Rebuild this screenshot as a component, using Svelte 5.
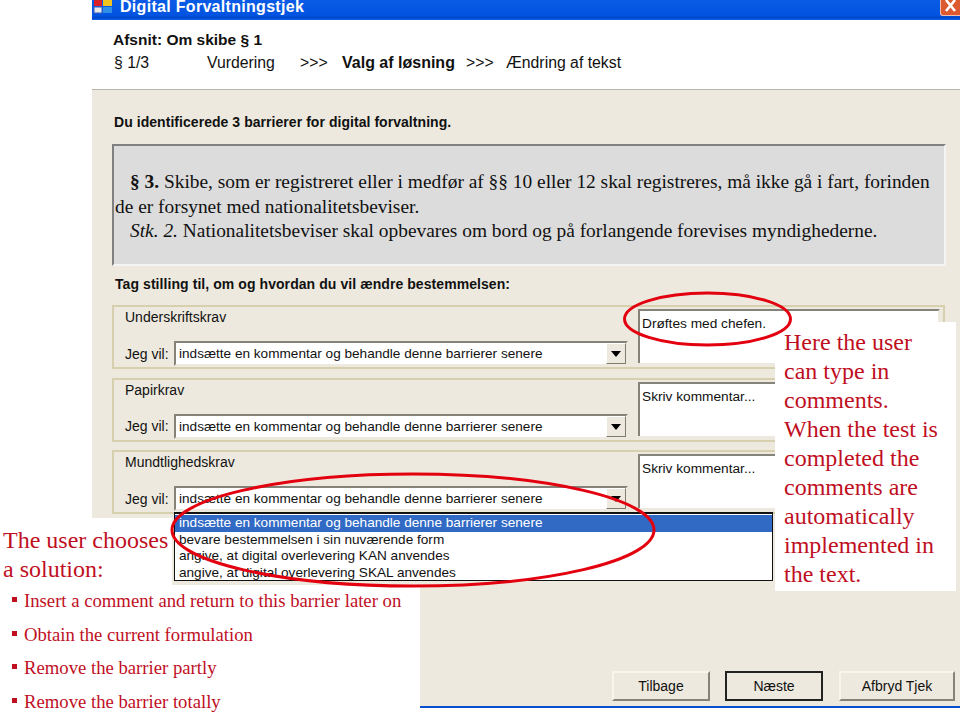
<script>
	const groups = [
		{ name: 'Underskriftskrav', comment: 'Drøftes med chefen.' },
		{ name: 'Papirkrav', comment: 'Skriv kommentar...' },
		{ name: 'Mundtlighedskrav', comment: 'Skriv kommentar...', open: true }
	];
	const options = [
		'indsætte en kommentar og behandle denne barrierer senere',
		'bevare bestemmelsen i sin nuværende form',
		'angive, at digital overlevering KAN anvendes',
		'angive, at digital overlevering SKAL anvendes'
	];
	const solutions = [
		'Insert a comment and return to this barrier later on',
		'Obtain the current formulation',
		'Remove the barrier partly',
		'Remove the barrier totally'
	];
</script>

<div class="page">
	<div class="window">
		<div class="titlebar">
			<svg class="app-icon" width="20" height="14" viewBox="0 0 20 14">
				<rect x="1" y="0" width="8" height="6" fill="#d8202a" />
				<rect x="10" y="0" width="9" height="6" fill="#f2c21f" />
				<rect x="1" y="7" width="8" height="6" fill="#e8e8e8" stroke="#3a5fc0" />
				<rect x="10" y="7" width="9" height="6" fill="#2f8fe8" />
			</svg>
			<span class="title">Digital Forvaltningstjek</span>
			<div class="close">
				<svg width="19" height="15" viewBox="0 0 19 15">
					<path d="M5 0 L14 11 M14 0 L5 11" stroke="#fff" stroke-width="2.6" />
				</svg>
			</div>
		</div>

		<div class="header">
			<div class="section">Afsnit: Om skibe § 1</div>
			<div class="steps">
				<span class="s-page">§ 1/3</span>
				<span class="s-eval">Vurdering</span>
				<span class="s-arrow">&gt;&gt;&gt;</span>
				<b class="s-cur">Valg af løsning</b>
				<span class="s-arrow2">&gt;&gt;&gt;</span>
				<span>Ændring af tekst</span>
			</div>
		</div>

		<div class="body">
			<h2 class="intro">Du identificerede 3 barrierer for digital forvaltning.</h2>
			<div class="law">
				<p class="indent"><b>§ 3.</b> Skibe, som er registreret eller i medfør af §§ 10 eller 12 skal registreres, må ikke gå i fart, forinden de er forsynet med nationalitetsbeviser.</p>
				<p class="indent"><i>Stk. 2.</i> Nationalitetsbeviser skal opbevares om bord og på forlangende forevises myndighederne.</p>
			</div>
			<h2 class="ask">Tag stilling til, om og hvordan du vil ændre bestemmelsen:</h2>

			<div class="groups">
				{#each groups as g}
					<div class="group">
						<div class="choice">
							<div class="g-name">{g.name}</div>
							<div class="g-row">
								<span class="jeg">Jeg vil:</span>
								<div class="combo">
									<span class="value">{options[0]}</span>
									<span class="arrow"></span>
									{#if g.open}
										<ul class="list">
											{#each options as o, i}
												<li class:sel={i === 0}>{o}</li>
											{/each}
										</ul>
									{/if}
								</div>
							</div>
						</div>
						<div class="comment">{g.comment}</div>
					</div>
				{/each}
			</div>

			<div class="buttons">
				<button class="b1">Tilbage</button>
				<button class="b2">Næste</button>
				<button class="b3">Afbryd Tjek</button>
			</div>
		</div>
	</div>

	<div class="note-right">
		Here the user can type in comments. When the test is completed the comments are automatically implemented in the text.
	</div>

	<div class="note-left">
		<div class="lead">The user chooses<br />a solution:</div>
		<ul class="bullets">
			{#each solutions as s}
				<li>{s}</li>
			{/each}
		</ul>
	</div>

	<svg class="marks" width="960" height="720" viewBox="0 0 960 720">
		<ellipse cx="707.5" cy="319" rx="83" ry="26" />
		<ellipse cx="413" cy="530" rx="241" ry="56" />
	</svg>
</div>

<style>
	:global(body) {
		margin: 0;
		background: #fff;
	}

	.page {
		position: relative;
		width: 960px;
		height: 720px;
		overflow: hidden;
		font-family: 'Liberation Sans', sans-serif;
		font-size: 14px;
		color: #111;
	}

	.window {
		margin-left: 92px;
		height: 708px;
		display: flex;
		flex-direction: column;
		border-bottom: 2px solid #0a4fd0;
		box-sizing: border-box;
	}

	.titlebar {
		height: 20px;
		flex: none;
		display: flex;
		align-items: flex-start;
		gap: 7px;
		background: linear-gradient(#0a5ce6, #0053e0 80%, #0044c8 88%, #0a62f0);
		color: #fff;
	}

	.app-icon {
		flex: none;
		margin-left: 1px;
	}

	.title {
		font-size: 16px;
		font-weight: bold;
		line-height: 13px;
		letter-spacing: 0.3px;
	}

	.close {
		margin-left: auto;
		width: 19px;
		height: 15px;
		background: #dd5a30;
		border-left: 1px solid #f0c0b0;
		border-bottom: 1px solid #f0c0b0;
		border-bottom-left-radius: 3px;
		box-sizing: content-box;
	}

	.close svg {
		display: block;
	}

	.header {
		height: 70px;
		flex: none;
		box-sizing: border-box;
		padding: 12px 0 0 21px;
		background: #fff;
		border-bottom: 1px solid #b8b5a8;
	}

	.section {
		font-size: 15.5px;
		font-weight: bold;
		line-height: 16px;
	}

	.steps {
		display: flex;
		margin-top: 7px;
		padding-left: 1px;
		font-size: 15.8px;
		line-height: 16px;
	}

	.steps > * {
		flex: none;
	}

	.s-page {
		width: 93px;
	}

	.s-eval {
		width: 93px;
	}

	.s-arrow {
		width: 42px;
	}

	.s-cur {
		width: 124px;
		font-size: 16px;
	}

	.s-arrow2 {
		width: 40px;
	}

	.body {
		flex: 1;
		display: flex;
		flex-direction: column;
		background: #ede9de;
		padding: 0 5px 5px 20px;
	}

	h2 {
		margin: 0;
		font-size: 14px;
		line-height: 16px;
	}

	.intro {
		margin: 24px 0 0 2px;
		letter-spacing: 0.05px;
	}

	.law {
		margin-top: 14px;
		width: 834px;
		height: 122px;
		box-sizing: border-box;
		padding: 24px 8px 0 1px;
		background: #dcdcdc;
		border: 2px solid;
		border-color: #808080 #f4f4f4 #f4f4f4 #808080;
		font-family: 'Liberation Serif', serif;
		font-size: 19.4px;
		line-height: 24.5px;
	}

	.law p {
		margin: 0;
	}

	.indent {
		text-indent: 15px;
	}

	.ask {
		margin: 10px 0 0 3px;
		letter-spacing: 0.07px;
	}

	.groups {
		display: flex;
		flex-direction: column;
		gap: 8.5px;
		margin-top: 13px;
	}

	.group {
		width: 833px;
		height: 64px;
		box-sizing: border-box;
		display: flex;
		border: 2px solid #d6d0ae;
	}

	.choice {
		width: 522px;
		flex: none;
		padding-left: 11px;
		box-sizing: border-box;
		display: flex;
		flex-direction: column;
	}

	.g-name {
		line-height: 16px;
		margin-top: 2px;
	}

	.g-row {
		display: flex;
		align-items: center;
		margin-top: 16px;
	}

	.jeg {
		width: 49px;
		flex: none;
	}

	.combo {
		position: relative;
		width: 454px;
		height: 25px;
		flex: none;
		box-sizing: border-box;
		display: flex;
		align-items: center;
		justify-content: space-between;
		background: #fff;
		border: 2px solid;
		border-color: #85827a #ede9de #ede9de #85827a;
		padding-left: 3px;
		font-size: 13.6px;
	}

	.value {
		white-space: nowrap;
	}

	.arrow {
		width: 20px;
		height: 21px;
		box-sizing: border-box;
		position: relative;
		background: #ede9de;
		border: 1px solid;
		border-color: #fff #7f7c70 #7f7c70 #fff;
	}

	.arrow::after {
		content: '';
		position: absolute;
		left: 4px;
		top: 7px;
		border: 5px solid transparent;
		border-top: 6px solid #000;
		border-bottom: 0;
	}

	.list {
		position: absolute;
		z-index: 2;
		left: -2px;
		top: 24px;
		width: 599px;
		height: 69px;
		box-sizing: border-box;
		margin: 0;
		padding: 1px 0 0;
		list-style: none;
		background: #fff;
		border: 1px solid #111;
		border-top-width: 2px;
		line-height: 16.7px;
	}

	.list li {
		padding-left: 4px;
		white-space: nowrap;
	}

	.list .sel {
		background: #316ac5;
		color: #fff;
	}

	.comment {
		margin: 2px 3px 0 2px;
		flex: 1;
		height: 54px;
		box-sizing: border-box;
		background: #fff;
		border: 2px solid;
		border-color: #85827a #ede9de #ede9de #85827a;
		border-bottom: 0;
		padding: 5px 2px;
		font-size: 13.7px;
		line-height: 16px;
	}

	.buttons {
		margin-top: auto;
		display: flex;
	}

	.buttons button {
		flex: none;
		height: 30px;
		padding: 0;
		font: inherit;
		color: #111;
		background: #ede9de;
		border: 2px solid;
		border-color: #f8f6ec #85827a #85827a #f8f6ec;
	}

	.b1 {
		width: 98px;
		margin-left: 500px;
	}

	.buttons .b2 {
		width: 98px;
		margin-left: 15px;
		border-color: #222;
	}

	.b3 {
		width: 116px;
		margin-left: 16px;
	}

	.note-right {
		position: absolute;
		z-index: 3;
		left: 775px;
		top: 322px;
		width: 181px;
		height: 269px;
		box-sizing: border-box;
		padding: 6px 9px;
		background: #fff;
		font-family: 'Liberation Serif', serif;
		font-size: 24px;
		line-height: 29px;
		color: #bf0f1f;
	}

	.note-left {
		position: absolute;
		z-index: 3;
		left: 0;
		top: 518px;
		width: 420px;
		color: #bf0f1f;
		font-family: 'Liberation Serif', serif;
		pointer-events: none;
	}

	.lead {
		width: 172px;
		height: 67px;
		box-sizing: border-box;
		padding: 8px 0 0 3px;
		background: #fff;
		font-size: 24px;
		line-height: 29px;
		white-space: nowrap;
	}

	.bullets {
		margin: 0;
		height: 135px;
		box-sizing: border-box;
		padding: 6px 0 0 24px;
		list-style: none;
		background: #fff;
		font-size: 18.7px;
		line-height: 20px;
	}

	.bullets li {
		position: relative;
		margin-bottom: 13.6px;
	}

	.bullets li::before {
		content: '';
		position: absolute;
		left: -12px;
		top: 6px;
		width: 5px;
		height: 5px;
		background: #bf0f1f;
	}

	.marks {
		position: absolute;
		z-index: 4;
		left: 0;
		top: 0;
		pointer-events: none;
	}

	.marks ellipse {
		fill: none;
		stroke: #e3000f;
		stroke-width: 3;
	}
</style>
